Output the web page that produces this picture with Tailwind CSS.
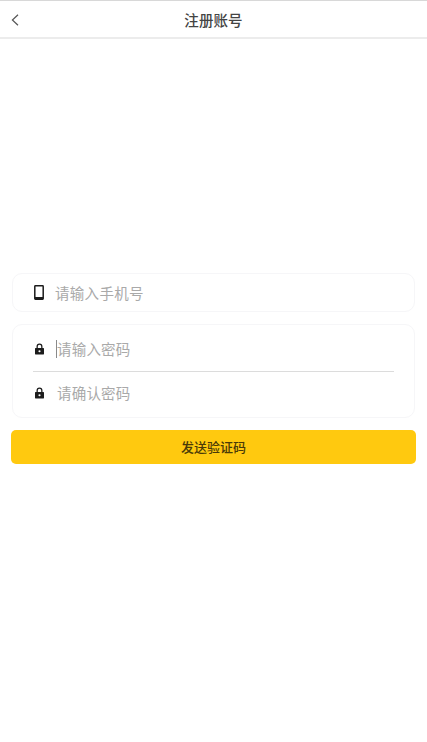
<!DOCTYPE html>
<html lang="zh-CN">
<head>
    <meta charset="UTF-8">
    <title>注册账号</title>
    <script src="https://cdn.jsdelivr.net/npm/@tailwindcss/browser@4"></script>
</head>
<body class="bg-white font-['Noto_Sans_CJK_SC','Noto_Sans',sans-serif] w-[427px] h-[742px] overflow-hidden">
    <!-- header -->
    <header class="h-[39px] flex items-center relative border-t border-t-[#d8d8d8] border-b-2 border-b-[#ececec]">
        <button class="pl-[11px] pt-[1px] flex items-center">
            <svg class="w-[8px] h-[12px]" viewBox="0 0 8 12" fill="none" stroke="#555555" stroke-width="1.2">
                <path d="M7 0.8 L1.4 6 L7 11.2"/>
            </svg>
        </button>
        <h1 class="absolute inset-x-0 top-[9px] text-center text-[14.5px] tracking-[0.1px] leading-[20px] text-[#444444] font-medium">注册账号</h1>
    </header>

    <main class="pt-[234px] flex flex-col">
        <!-- phone -->
        <div class="mx-3 h-[39px] w-[403px] border border-[#f6f6f8] rounded-[10px] flex items-center pl-[21px]">
            <svg class="w-[10px] h-[15px]" viewBox="0 0 10 15" fill="none">
                <rect x="0.8" y="0.8" width="8.4" height="13.4" rx="0.6" stroke="#1c1c1c" stroke-width="1.5"/>
                <rect x="0.8" y="12" width="8.4" height="2.2" fill="#1c1c1c"/>
            </svg>
            <span class="ml-[11px] text-[14.5px] tracking-[0.3px] leading-[20px] text-[#a9a9a9]">请输入手机号</span>
        </div>

        <!-- passwords -->
        <div class="mx-3 mt-[12px] h-[94px] w-[403px] border border-[#f6f6f8] rounded-[10px] flex flex-col">
            <div class="h-[47px] mx-[20px] pt-[2px] border-b border-[#dcdcdc] flex items-center">
                <svg class="w-[9px] h-[12px] ml-[2px]" viewBox="0 0 10 13">
                    <path d="M2.4 6 V3.8 a2.6 2.6 0 0 1 5.2 0 V6" fill="none" stroke="#1c1c1c" stroke-width="1.4"/>
                    <rect x="0" y="5.5" width="10" height="7" rx="0.6" fill="#1c1c1c"/>
                    <circle cx="5" cy="9" r="1.2" fill="#ffffff"/>
                </svg>
                <span class="ml-[12px] w-px h-[18px] bg-[#8a8a8a]"></span>
                <span class="text-[14.5px] tracking-[0.2px] leading-[20px] text-[#a9a9a9]">请输入密码</span>
            </div>
            <div class="flex-1 mx-[20px] pb-[3px] flex items-center">
                <svg class="w-[9px] h-[12px] ml-[2px]" viewBox="0 0 10 13">
                    <path d="M2.4 6 V3.8 a2.6 2.6 0 0 1 5.2 0 V6" fill="none" stroke="#1c1c1c" stroke-width="1.4"/>
                    <rect x="0" y="5.5" width="10" height="7" rx="0.6" fill="#1c1c1c"/>
                    <circle cx="5" cy="9" r="1.2" fill="#ffffff"/>
                </svg>
                <span class="ml-[13px] text-[14.5px] tracking-[0.2px] leading-[20px] text-[#a9a9a9]">请确认密码</span>
            </div>
        </div>

        <button class="mx-[11px] mt-[12px] h-[34px] w-[405px] bg-[#ffc90f] rounded-[5px] text-[13px] text-[#4a3a08] font-medium flex items-center justify-center">发送验证码</button>
    </main>
</body>
</html>
